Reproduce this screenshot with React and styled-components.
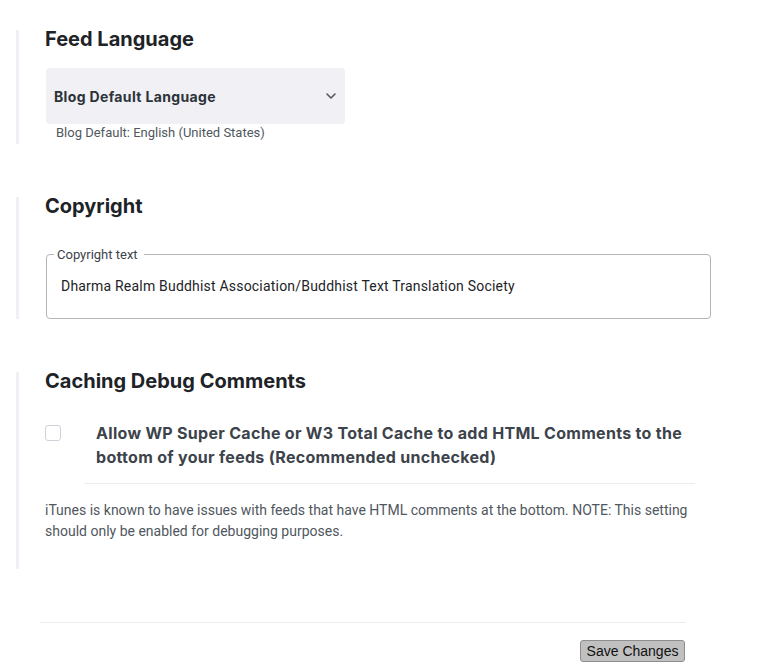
import React from "react";
import styled, { createGlobalStyle } from "styled-components";

const GlobalStyle = createGlobalStyle`
  body {
    margin: 0;
    background: #fff;
    font-family: Roboto, "Liberation Sans", sans-serif;
    color: #1d2327;
  }
`;

const Page = styled.div`
  padding: 30px 0 0 16px;
  width: 782px;
  box-sizing: border-box;
`;

const Section = styled.section`
  border-left: 3px solid #efeff5;
  padding-left: 26px;
  margin-bottom: 53px;
  box-sizing: border-box;
  min-height: ${(p) => p.$minHeight || 0}px;
`;

const Heading = styled.h2`
  margin: 0;
  font-family: Inter, Roboto, sans-serif;
  font-size: 20px;
  line-height: 18px;
  font-weight: 700;
  color: #1d2327;
`;

const SelectBox = styled.div`
  margin: 20px 0 0 1px;
  width: 299px;
  height: 56px;
  background: #f0f0f5;
  border-radius: 4px;
  display: flex;
  align-items: center;
  justify-content: space-between;
  padding: 0 8px 0 8px;
  box-sizing: border-box;
  font-family: Inter, Roboto, sans-serif;
  font-size: 14px;
  font-weight: 700;
  color: #2c3338;
  letter-spacing: 0.35px;
`;

const Helper = styled.div`
  margin: 2px 0 0 11px;
  font-size: 13px;
  line-height: 14px;
  color: #50575e;
  padding-bottom: 4px;
`;

const Fieldset = styled.fieldset`
  margin: 32px 0 0 1px;
  width: 665px;
  height: 72px;
  box-sizing: border-box;
  border: 1px solid #b4b4bb;
  border-radius: 4px;
  padding: 0 14px;
`;

const Legend = styled.legend`
  font-size: 13px;
  line-height: 15px;
  color: #3c434a;
  padding: 0 6px 0 3px;
  margin-left: -7px;
`;

const Value = styled.div`
  margin-top: 16px;
  font-size: 14px;
  letter-spacing: 0.2px;
  color: #1d2327;
`;

const CheckRow = styled.div`
  margin-top: 29px;
  display: flex;
  align-items: flex-start;
`;

const Box = styled.span`
  width: 16px;
  height: 16px;
  margin-top: 6px;
  border: 1.5px solid #d0d0db;
  border-radius: 3px;
  box-sizing: border-box;
  flex-shrink: 0;
`;

const LabelBlock = styled.div`
  margin-left: 23px;
  width: 611px;
  padding: 2px 12px 14px;
  box-sizing: border-box;
  border-bottom: 1px solid #ececf0;
  font-family: Inter, Roboto, sans-serif;
  font-size: 16px;
  line-height: 24px;
  font-weight: 700;
  color: #3c434a;
  letter-spacing: 0.3px;
`;

const Note = styled.p`
  margin: 16px 0 0;
  width: 650px;
  font-size: 14px;
  line-height: 21px;
  color: #50575e;
`;

const Footer = styled.div`
  margin-left: 24px;
  width: 646px;
  border-top: 1px solid #ececf3;
  padding-top: 17px;
  display: flex;
  justify-content: flex-end;
`;

const SaveButton = styled.button`
  width: 105px;
  height: 22px;
  padding: 0;
  background: #c0c0c0;
  border: 1px solid #8e8e8e;
  border-radius: 3px;
  font-family: "Liberation Sans", Arial, sans-serif;
  font-size: 14px;
  color: #111;
  margin-right: 1px;
`;

const Chevron = () => (
  <svg width="12" height="12" viewBox="0 0 12 12" fill="none">
    <path d="M2 4l4 4 4-4" stroke="#50575e" strokeWidth="1.6" strokeLinecap="round" strokeLinejoin="round" />
  </svg>
);

export default function App() {
  return (
    <>
      <GlobalStyle />
      <Page>
        <Section>
          <Heading>Feed Language</Heading>
          <SelectBox>
            <span>Blog Default Language</span>
            <Chevron />
          </SelectBox>
          <Helper>Blog Default: English (United States)</Helper>
        </Section>

        <Section>
          <Heading>Copyright</Heading>
          <Fieldset>
            <Legend>Copyright text</Legend>
            <Value>Dharma Realm Buddhist Association/Buddhist Text Translation Society</Value>
          </Fieldset>
        </Section>

        <Section $minHeight={197}>
          <Heading>Caching Debug Comments</Heading>
          <CheckRow>
            <Box />
            <LabelBlock>
              Allow WP Super Cache or W3 Total Cache to add HTML Comments to the bottom of your feeds
              (Recommended unchecked)
            </LabelBlock>
          </CheckRow>
          <Note>
            iTunes is known to have issues with feeds that have HTML comments at the bottom. NOTE: This setting
            should only be enabled for debugging purposes.
          </Note>
        </Section>

        <Footer>
          <SaveButton>Save Changes</SaveButton>
        </Footer>
      </Page>
    </>
  );
}
